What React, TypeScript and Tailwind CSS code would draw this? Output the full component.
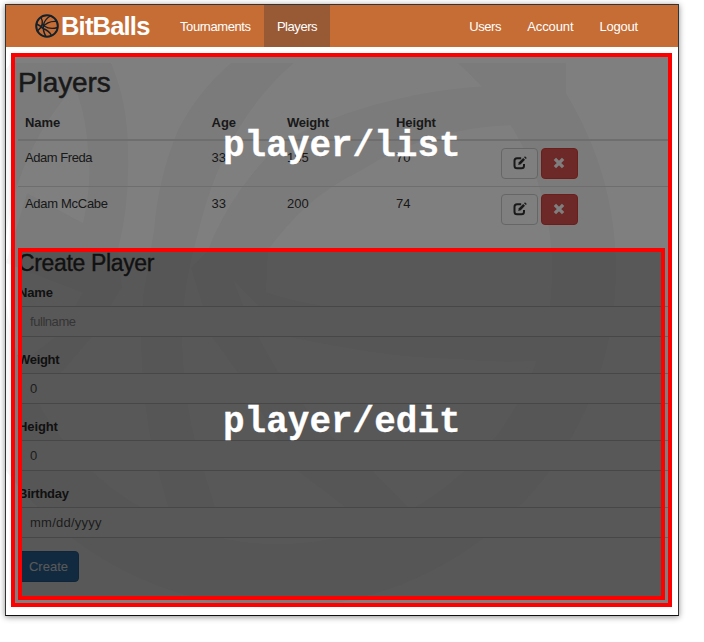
import React from "react";

const players = [
  { name: "Adam Freda", age: 33, weight: 185, height: 70, ls: "tracking-[-0.450px]" },
  { name: "Adam McCabe", age: 33, weight: 200, height: 74, ls: "tracking-[-0.300px]" },
];

const fields = [
  { label: "Name", value: "fullname", tone: "text-[#999]", ls: "tracking-[-0.450px]", labelLs: "tracking-[-0.150px]" },
  { label: "Weight", value: "0", tone: "text-[#555]", ls: "", labelLs: "tracking-[-0.300px]" },
  { label: "Height", value: "0", tone: "text-[#555]", ls: "", labelLs: "tracking-[-0.100px]" },
  { label: "Birthday", value: "mm/dd/yyyy", tone: "text-[#555]", ls: "tracking-[0.250px]", labelLs: "tracking-[-0.250px]" },
];

function BallLogo() {
  return (
    <svg viewBox="0 0 24 24" className="h-6 w-6 shrink-0" fill="none" stroke="#14202a" strokeWidth="1.4">
      <circle cx="12" cy="12" r="10.8" strokeWidth="2" />
      <path d="M6 3.500C8.500 8 7.500 13 2.500 17M15.500 2C8 6 6 14 11 22.500M1.500 10C5 11.500 7 12.500 9 15.500M7.500 13.500C11 9 16 7 21.500 7.500M9 12C13 14.500 18 15 22.500 13.500M8 14.500C12 16 15 18.500 16.500 21.500" />
    </svg>
  );
}

function Watermark() {
  return (
    <svg viewBox="0 0 672 548" className="absolute left-0 top-4 h-[548px] w-[672px]" fill="#f7f7f7">
      <circle cx="272" cy="207" r="306" strokeWidth="64" fill="none" stroke="#f7f7f7" />
      <path d="M58 0H105Q122 40 122 87Q124 140 112 187L116 224L86 274L56 309L0 350L17 299L49 274L77 230L0 200L21 130L77 160Q86 120 82 87Q80 55 71 30Z" />
      <path d="M225 0H288Q255 28 232 67Q205 115 193 167Q176 225 176 274Q178 350 198 408L209 444L225 500H178L162 444L152 408Q136 350 135 274L137 234L148 167Q152 115 172 67Q192 28 225 0Z" />
      <path d="M457 0H560V62H515Q470 62 430 74Q390 85 356 107Q325 122 300 144Q278 165 262 187L260 229Q285 238 318 243Q440 268 545 265L530 298Q490 300 451 296Q405 295 365 289Q320 282 283 274L228 218L185 205L202 187Q220 140 258 97Q275 78 300 67Q340 48 387 37Q430 26 480 23Z" />
      <path d="M185 205L228 218Q240 255 273 310Q315 370 367 408L402 444L440 490H380L339 444L292 408Q260 360 232 310L206 274Z" />
    </svg>
  );
}

function EditIcon() {
  return (
    <svg viewBox="0 0 14 14" className="-mt-0.5 h-3.5 w-3.5" fill="none" stroke="#333">
      <path d="M8.200 2.200H4Q1.500 2.200 1.500 4.700V9.700Q1.500 12.200 4 12.200H8.500Q11 12.200 11 9.700V8" strokeWidth="2" />
      <path d="M5.200 9L5.900 6.200L10.200 2L12 3.800L7.800 8.200Z" fill="#333" stroke="none" />
      <path d="M11 1.300L12 .3L13.800 2.100L12.800 3.100Z" fill="#333" stroke="none" />
    </svg>
  );
}

function RemoveIcon() {
  return (
    <svg viewBox="0 0 12 12" className="-mt-px mr-0.5 h-3 w-3" stroke="#fff" strokeWidth="3.300">
      <path d="M1.900 1.900L10.100 10.100M10.100 1.900L1.900 10.100" />
    </svg>
  );
}

const cols = "grid grid-cols-[186.500px_75.500px_109px_105px_1fr] pl-[7px]";

export default function App() {
  return (
    <div className="h-[642px] w-[704px] overflow-hidden bg-white pl-[5px] pt-1 font-['Liberation_Sans',Arial,sans-serif] text-[13px] leading-[18px] text-[#333]">
      <div className="relative h-[612px] w-[674px] border border-[#333] border-b-[#111] bg-white shadow-[0_1px_6px_rgba(0,0,0,0.45)]">
        <nav className="flex h-[42px] items-stretch bg-[#c66d35] text-white">
          <div className="flex w-[161px] items-center pl-[29px]">
            <BallLogo />
            <span className="ml-[2px] mt-px text-[25.500px] font-bold leading-none tracking-[-0.800px]">BitBalls</span>
          </div>
          <a className="flex w-[97px] items-center pl-[13px] pt-0.5 tracking-[-0.420px]">Tournaments</a>
          <a className="flex w-[66px] items-center justify-center bg-[#985a35] pt-0.5 tracking-[-0.450px]">Players</a>
          <div className="ml-auto flex items-center gap-[26px] pr-10 pt-0.5">
            <a className="tracking-[-0.400px]">Users</a>
            <a className="tracking-[-0.100px]">Account</a>
            <a className="tracking-[-0.200px]">Logout</a>
          </div>
        </nav>

        <main className="relative h-[568px] overflow-hidden pl-3 pr-2">
          <Watermark />
          <div className="relative">
            <h1 className="h-[67px] pt-5 text-[28px] leading-8 tracking-[-0.100px] [-webkit-text-stroke:0.500px_#333]">Players</h1>
            <div className={cols + " h-[27px] border-b-2 border-[#ddd] font-bold"}>
              <span className="tracking-[-0.100px]">Name</span>
              <span>Age</span>
              <span className="tracking-[-0.200px]">Weight</span>
              <span className="tracking-[-0.100px]">Height</span>
            </div>
            {players.map((p, i) => (
              <div key={p.name} className={cols + (i === 0 ? " h-[46px] border-b border-[#ddd]" : " h-[46px]") + " pt-2"}>
                <span className={p.ls}>{p.name}</span>
                <span>{p.age}</span>
                <span>{p.weight}</span>
                <span>{p.height}</span>
                <span className="-mt-px flex gap-[3px]">
                  <button className="flex h-[31px] w-[37px] items-center justify-center rounded border border-[#ccc] bg-white"><EditIcon /></button>
                  <button className="flex h-[31px] w-[37px] items-center justify-center rounded border border-[#d43f3a] bg-[#d9534f]"><RemoveIcon /></button>
                </span>
              </div>
            ))}
            <h2 className="mt-[16px] h-8 text-[23px] leading-7 tracking-[-0.350px] [-webkit-text-stroke:0.350px_#333]">Create Player</h2>
            {fields.map((f) => (
              <div key={f.label} className="h-[67px]">
                <div className={"h-[25px] pt-[3px] font-bold " + f.labelLs}>{f.label}</div>
                <div className={"flex h-[31px] items-center rounded-l border border-r-0 border-[#ccc] bg-white pl-[11px] " + f.tone + " " + f.ls}>{f.value}</div>
              </div>
            ))}
            <button className="mt-0.5 h-[31px] w-[61px] rounded border border-[#2e6da4] bg-[#337ab7] text-white">Create</button>
          </div>
        </main>

        <section className="absolute left-[5px] top-12 h-[554px] w-[661px] border-4 border-[#f00] bg-black/50 bg-clip-padding font-['Liberation_Mono','Courier_New',monospace] text-[36px] font-bold leading-10 text-white">
          <div className="pl-[208px] pt-[70px] [-webkit-text-stroke:0.300px_white]">player/list</div>
          <div className="ml-[3px] mt-[81px] h-[352px] w-[647px] border-4 border-[#f00] bg-black/30 bg-clip-padding pl-[201px] pt-[151px] [-webkit-text-stroke:0.300px_white]">player/edit</div>
        </section>
      </div>
    </div>
  );
}
